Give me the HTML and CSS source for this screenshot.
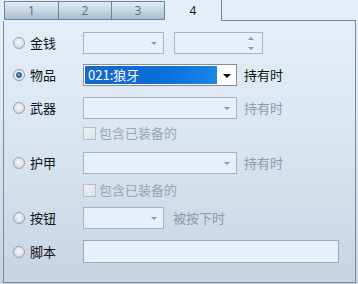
FILE: index.html
```html
<!DOCTYPE html>
<html>
<head>
<meta charset="utf-8">
<link rel="stylesheet" href="styles.css">
</head>
<body>
<div class="tabs">
  <div class="tab first">1</div>
  <div class="tab">2</div>
  <div class="tab">3</div>
  <div class="tab active">4</div>
  <div class="tab-fill"></div>
</div>
<div class="panel">
  <div class="row r1">
    <div class="opt"><span class="radio"></span>金钱</div>
    <div class="combo short"><span class="arrow"></span></div>
    <div class="spin"><span class="up"></span><span class="down"></span></div>
  </div>
  <div class="row r2">
    <div class="opt"><span class="radio on"></span>物品</div>
    <div class="combo long focus"><div class="sel">021:狼牙</div><span class="arrow dark"></span></div>
    <span class="after">持有时</span>
  </div>
  <div class="row r3">
    <div class="opt"><span class="radio"></span>武器</div>
    <div class="combo long"><span class="arrow"></span></div>
    <span class="after dim">持有时</span>
  </div>
  <div class="check c1"><span class="box"></span>包含已装备的</div>
  <div class="row r4">
    <div class="opt"><span class="radio"></span>护甲</div>
    <div class="combo long"><span class="arrow"></span></div>
    <span class="after dim">持有时</span>
  </div>
  <div class="check c2"><span class="box"></span>包含已装备的</div>
  <div class="row r5">
    <div class="opt"><span class="radio"></span>按钮</div>
    <div class="combo short"><span class="arrow"></span></div>
    <span class="after dim wide">被按下时</span>
  </div>
  <div class="row r6">
    <div class="opt"><span class="radio"></span>脚本</div>
    <div class="input"></div>
  </div>
</div>
</body>
</html>
```

FILE: styles.css
```css
html, body {
  margin: 0;
  padding: 0;
}
body {
  width: 358px;
  height: 284px;
  overflow: hidden;
  background: linear-gradient(to bottom, #e6eef9 0%, #dbe6f2 45%, #c7d4e1 100%);
  font-family: "Noto Sans CJK SC", "Noto Sans", sans-serif;
  font-size: 13px;
  color: #111;
}
.tabs {
  display: flex;
  height: 21px;
  padding-left: 4px;
}
.tab {
  box-sizing: border-box;
  width: 53px;
  height: 19px;
  margin-top: 1px;
  border-top: 1px solid #6e8398;
  border-bottom: 1px solid #6e8398;
  border-right: 1px solid #6e8398;
  background: linear-gradient(to bottom, #e2ebf4 0%, #c9d8e6 45%, #a6bdd0 100%);
  font-family: "Open Sans", "DejaVu Sans", sans-serif;
  font-size: 12px;
  line-height: 17px;
  text-align: center;
  color: #5b6c7e;
}
.tab.first {
  width: 55px;
  border-left: 1px solid #6e8398;
}
.tab.active {
  width: 57px;
  height: 21px;
  margin-top: 0;
  border: none;
  border-right: 1px solid #6e8398;
  background: transparent;
  color: #111;
  line-height: 21px;
}
.tab-fill {
  box-sizing: border-box;
  width: 134px;
  height: 21px;
  border-bottom: 1px solid #6e8398;
}
.panel {
  box-sizing: border-box;
  margin-left: 3px;
  width: 353px;
  height: 262px;
  border-left: 1px solid #7a8a9b;
  border-right: 1px solid #7a8a9b;
  border-bottom: 1px solid #7a8a9b;
  padding: 11px 0 0 9px;
  display: flex;
  flex-direction: column;
}
.row {
  display: flex;
  align-items: center;
  height: 22px;
}
.r2 { margin-top: 10px; }
.r3 { margin-top: 11px; }
.r4 { margin-top: 13px; }
.r5 { margin-top: 11px; }
.r6 { margin-top: 11px; height: 23px; }
.opt {
  width: 70px;
  display: flex;
  align-items: center;
  line-height: 16px;
}
.radio {
  box-sizing: border-box;
  width: 12px;
  height: 12px;
  border-radius: 50%;
  border: 1px solid #98a2ad;
  background: radial-gradient(circle at 50% 40%, #f4f6f8 0%, #dfe3e7 55%, #c2c8cf 100%);
  margin-right: 5px;
  position: relative;
}
.radio.on {
  border-color: #8a96a3;
  background: radial-gradient(circle, #f0f3f6 0%, #e2e7ec 100%);
}
.radio.on::after {
  content: "";
  position: absolute;
  left: 2px;
  top: 2px;
  width: 6px;
  height: 6px;
  box-sizing: border-box;
  border-radius: 50%;
  border: 1px solid #1f4a73;
  background: radial-gradient(circle at 40% 35%, #7fb9ee 0%, #2b78c4 60%, #1b4f85 100%);
}
.combo {
  box-sizing: border-box;
  height: 22px;
  border: 1px solid #a7b3c0;
  background: #e6effa;
  position: relative;
}
.combo.short { width: 81px; }
.combo.long { width: 154px; }
.combo.focus {
  background: #fff;
  border-color: #858f99;
}
.arrow {
  position: absolute;
  right: 6px;
  top: 9px;
  width: 0;
  height: 0;
  border-left: 3px solid transparent;
  border-right: 3px solid transparent;
  border-top: 3px solid #8d98a5;
}
.arrow.dark {
  right: 5px;
  border-left-width: 4px;
  border-right-width: 4px;
  border-top: 4px solid #000;
}
.sel {
  position: absolute;
  left: 1px;
  top: 1px;
  bottom: 1px;
  right: 19px;
  background: linear-gradient(to right, #1767c9 0%, #0b6fd8 60%, #1c86ea 100%);
  color: #fff;
  padding-left: 3px;
  line-height: 18px;
  display: flex;
  align-items: center;
}
.spin {
  box-sizing: border-box;
  width: 89px;
  height: 22px;
  margin-left: 10px;
  border: 1px solid #a7b3c0;
  background: #e6effa;
  position: relative;
}
.up, .down {
  position: absolute;
  right: 8px;
  width: 0;
  height: 0;
  border-left: 3px solid transparent;
  border-right: 3px solid transparent;
}
.up {
  top: 4px;
  border-bottom: 3px solid #8d98a5;
}
.down {
  top: 14px;
  border-top: 3px solid #8d98a5;
}
.after {
  margin-left: 7px;
  line-height: 16px;
}
.after.wide { margin-left: 9px; }
.dim { color: #8e9aa8; }
.check {
  display: flex;
  align-items: center;
  height: 12px;
  padding-left: 70px;
  color: #9aa5b2;
  line-height: 16px;
}
.c1 { margin-top: 8px; }
.c2 { margin-top: 10px; }
.box {
  box-sizing: border-box;
  width: 13px;
  height: 13px;
  border: 1px solid #b5bec8;
  background: linear-gradient(135deg, #eef1f4 0%, #dde2e7 100%);
  margin-right: 3px;
}
.input {
  box-sizing: border-box;
  width: 256px;
  height: 23px;
  border: 1px solid #9ba9b6;
  background: #e6effa;
}
```
